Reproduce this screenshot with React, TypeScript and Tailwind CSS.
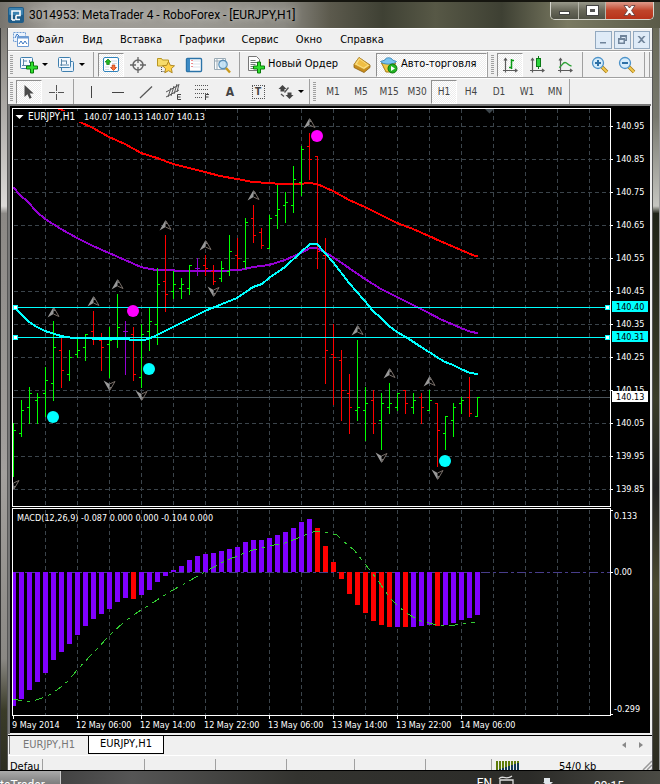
import type { ReactNode } from "react";

const UI = "font-['DejaVu_Sans_Condensed','Open_Sans',sans-serif]";

type Bar = [string, number, number, number | null, number];

const FIRST_X = 13;
const STEP = 8;

// colour, high, low, open, close
const BARS: Bar[] = [
  ["g", 423, 477, null, 430],
  ["g", 400, 437, 433, 410],
  ["g", 387, 424, 407, 393],
  ["g", 393, 424, 400, 397],
  ["g", 367, 417, 393, 380],
  ["g", 321, 401, 383, 347],
  ["r", 337, 388, 350, 370],
  ["g", 350, 381, 374, 357],
  ["g", 337, 358, 354, 350],
  ["g", 334, 361, 347, 334],
  ["r", 311, 345, 331, 338],
  ["r", 333, 371, 340, 347],
  ["g", 327, 378, 344, 340],
  ["g", 294, 348, 337, 327],
  ["p", 321, 375, 331, 331],
  ["r", 327, 381, 334, 374],
  ["g", 324, 388, 377, 334],
  ["g", 307, 351, 331, 321],
  ["g", 268, 345, 324, 284],
  ["r", 235, 312, 281, 294],
  ["g", 271, 299, 291, 284],
  ["g", 278, 299, 288, 284],
  ["g", 265, 295, 288, 265],
  ["p", 258, 276, 268, 268],
  ["r", 255, 276, 265, 268],
  ["r", 265, 285, 271, 281],
  ["g", 261, 282, 278, 268],
  ["g", 235, 276, 271, 251],
  ["r", 238, 269, 255, 258],
  ["g", 218, 269, 261, 222],
  ["r", 205, 243, 218, 235],
  ["r", 228, 249, 232, 245],
  ["g", 215, 249, 248, 218],
  ["g", 185, 229, 215, 209],
  ["g", 192, 223, 205, 202],
  ["g", 166, 213, 205, 179],
  ["g", 146, 196, 182, 149],
  ["r", 133, 180, 146, 159],
  ["r", 156, 269, 156, 251],
  ["r", 238, 384, 255, 350],
  ["r", 324, 405, 354, 357],
  ["r", 350, 421, 360, 390],
  ["r", 374, 434, 393, 407],
  ["g", 340, 421, 410, 407],
  ["g", 387, 441, 410, 403],
  ["r", 390, 434, 400, 423],
  ["g", 393, 450, 420, 403],
  ["g", 383, 414, 407, 403],
  ["g", 393, 411, 407, 393],
  ["r", 390, 414, 390, 403],
  ["g", 393, 414, 407, 400],
  ["r", 393, 424, 397, 407],
  ["g", 390, 411, 410, 400],
  ["r", 403, 467, 403, 430],
  ["g", 416, 450, 433, 416],
  ["g", 403, 437, 420, 407],
  ["g", 397, 414, 403, 400],
  ["r", 377, 417, 397, 413],
  ["g", 397, 417, 416, 397],
];

const BAR_COLOR: Record<string, string> = { g: "#00ff00", r: "#ff0000", p: "#9400d3" };

const MACD = [
  706, 699, 690, 682, 673, 660, 652, 644, 635, 626, 619, 614, 609, 602, 598, 599, 595, 590, 582, 576,
  570, 566, 560, 556, 554, 553, 551, 549, 547, 542, 540, 540, 538, 535, 532, 528, 522, 519, 528, 546,
  562, 579, 594, 605, 613, 621, 625, 627, 627, 627, 627, 626, 625, 626, 625, 623, 620, 618, 615,
];
const MACD_RED = new Set([15, 38, 39, 40, 41, 42, 43, 44, 45, 46, 47, 49, 53]);
const ZERO_Y = 572;

const RED_MA =
  "57,108 62,110 80,122 93,128 109,137 125,144 141,153 157,158 173,164 205,172 220,176 237,179 253,182 269,183 280,184 300,184 308,183 317,184 333,191 349,200 365,207 381,215 397,223 413,229 429,236 440,241 461,250 475,256 478,256";
const PURPLE_MA =
  "13,187 20,195 28,202 37,212 45,219 61,229 77,238 93,246 109,253 125,260 141,267 150,269 157,270 173,270 176,271 220,271 240,270 253,267 269,265 285,260 301,253 310,248 317,248 333,257 349,268 365,279 381,289 397,297 413,305 429,313 440,319 461,328 471,332 478,333";
const CYAN_MA =
  "14,307 20,313 29,322 37,327 45,331 61,336 73,338 109,339 127,339 132,340 145,340 153,337 173,327 189,319 205,311 222,304 237,298 253,287 262,284 269,278 285,267 301,252 310,244 317,244 325,253 333,262 349,283 364,300 373,311 381,318 389,326 397,332 409,339 421,347 429,352 440,359 445,362 453,365 461,369 470,373 478,374";
const SIGNAL =
  "13,699 23,701 33,701 45,697 51,694 61,687 69,680 77,670 93,653 109,636 125,621 141,610 157,600 173,590 189,581 205,572 221,563 237,556 253,550 269,546 285,543 301,537 309,533 317,531 328,533 337,535 343,541 354,550 359,556 365,564 373,574 381,585 389,597 397,605 405,612 413,617 421,621 429,623 437,625 455,625 463,624 475,622";

const UP = [[165, 220], [205, 240], [53, 307], [93, 296], [117, 279], [253, 190], [309, 118], [357, 325], [389, 368], [429, 376]];
const DOWN = [[213, 297], [109, 391], [141, 401], [13, 490], [381, 463], [437, 480]];

const PRICES = ["140.95", "140.85", "140.75", "140.65", "140.55", "140.45", "140.35", "140.25", "140.15", "140.05", "139.95", "139.85"];
const TIMES: [number, string][] = [
  [12, "9 May 2014"],
  [76, "12 May 06:00"],
  [140, "12 May 14:00"],
  [204, "12 May 22:00"],
  [268, "13 May 06:00"],
  [332, "13 May 14:00"],
  [396, "13 May 22:00"],
  [460, "14 May 06:00"],
];
const GRID_X = Array.from({ length: 18 }, (_, i) => 45 + 32 * i);

function Fractal({ x, y, down }: { x: number; y: number; down?: boolean }) {
  return (
    <g transform={`translate(${x + 0.5} ${y}) scale(1 ${down ? -1 : 1})`}>
      <path d="M0 0 L-6 10.500 L0 7 Z" fill="#999" />
      <path d="M0 0 L1.500 3.500 L0 4.500 Z" fill="#999" />
      <path d="M0.500 1 L5.500 9.500 L0 7" fill="none" stroke="#7a706a" strokeWidth="1" />
    </g>
  );
}

function Chart() {
  return (
    <svg viewBox="8 104 644 631" className="block h-auto w-full" role="img" aria-label="EURJPY,H1">
      <defs>
        <clipPath id="main">
          <rect x="13" y="109" width="597" height="397" />
        </clipPath>
      </defs>
      <rect x="8" y="104" width="644" height="631" fill="#f0f0f0" />
      <rect x="8" y="104" width="643" height="2" fill="#777" />
      <rect x="8" y="104" width="2" height="630" fill="#777" />
      <rect x="10" y="106" width="640" height="627" fill="#000" />
      <g shapeRendering="crispEdges" stroke="#3b444b" strokeDasharray="4 3" fill="none">
        {GRID_X.map((x) => (
          <path key={x} d={`M${x + 0.5} 109V506M${x + 0.5} 510V715`} />
        ))}
        {PRICES.map((p, i) => (
          <path key={p} d={`M14 ${126.5 + 33 * i}H610`} />
        ))}
      </g>
      <path d="M12 397.5H610" stroke="#4a545b" shapeRendering="crispEdges" />
      <g clipPath="url(#main)">
        <g fill="none" strokeWidth="2" strokeLinejoin="round" shapeRendering="crispEdges">
          <polyline points={RED_MA} stroke="#ff0000" />
          <polyline points={PURPLE_MA} stroke="#9400d3" />
        </g>
        <g shapeRendering="crispEdges" fill="none">
          {BARS.map(([c, hi, lo, op, cl], i) => {
            const x = FIRST_X + STEP * i;
            return (
              <path
                key={i}
                stroke={BAR_COLOR[c]}
                d={`M${x + 0.5} ${hi}V${lo}M${x + 1} ${cl + 0.5}h2${op === null ? "" : `M${x - 2} ${op + 0.5}h2`}`}
              />
            );
          })}
        </g>
        <polyline points={CYAN_MA} fill="none" stroke="#00ffff" strokeWidth="2" strokeLinejoin="round" shapeRendering="crispEdges" />
        {UP.map(([x, y]) => (
          <Fractal key={`${x}-${y}`} x={x} y={y} />
        ))}
        {DOWN.map(([x, y]) => (
          <Fractal key={`${x}-${y}`} x={x} y={y} down />
        ))}
        <path d="M485 109h9l-4.500 4.500z" fill="#3e474d" />
      </g>
      <g shapeRendering="crispEdges">
        <path d="M13 307.500H610M13 337.500H610" stroke="#00ffff" />
        {[[15, 307], [15, 337], [607, 307], [607, 337]].map(([x, y]) => (
          <rect key={`${x}-${y}`} x={x - 1.5} y={y - 1.5} width="4" height="4" fill="#fff" stroke="#00ffff" />
        ))}
      </g>
      <g>
        <circle cx="317" cy="136" r="6" fill="#ff00ff" />
        <circle cx="133" cy="311" r="6" fill="#ff00ff" />
        <circle cx="149" cy="369" r="6" fill="#00ffff" />
        <circle cx="53" cy="417" r="6" fill="#00ffff" />
        <circle cx="445" cy="461" r="6" fill="#00ffff" />
      </g>
      <g shapeRendering="crispEdges">
        <path d={`M13 ${ZERO_Y + 0.5}H610`} stroke="#483d8b" strokeDasharray="9 3 3 3" />
        {MACD.map((y, i) => {
          const x = i === 0 ? 13 : FIRST_X + STEP * i - 2;
          return (
            <rect
              key={i}
              x={x}
              y={Math.min(y, ZERO_Y)}
              width={i === 0 ? 3 : 5}
              height={Math.abs(y - ZERO_Y)}
              fill={MACD_RED.has(i) ? "#ff0000" : "#8000ff"}
            />
          );
        })}
        <polyline points={SIGNAL} fill="none" stroke="#32cd32" strokeDasharray="9 5 3 5" />
        <path
          d="M12.500 108.500H610.500V506.500H12.500ZM12.500 508.500H610.500V715.500H12.500Z"
          fill="none"
          stroke="#fff"
        />
        <path
          stroke="#fff"
          d={PRICES.map((_, i) => `M611 ${126.5 + 33 * i}h2`).join("") + "M611 510.500h2M611 572.500h2M611 714.500h2" + TIMES.map(([x]) => `M${x + 1.5} 716v3`).join("")}
        />
      </g>
      <rect x="16" y="111" width="190" height="11" fill="#000" />
      <path d="M15.500 115h8l-4 4z" fill="#fff" />
      <g className={`text-[9px] ${UI}`} fill="#fff">
        <text x="28" y="120" className="text-[10px]">EURJPY,H1</text>
        <text x="84" y="120">140.07 140.13 140.07 140.13</text>
        <text x="17" y="521">MACD(12,26,9) -0.087 0.000 0.000 -0.104 0.000</text>
        {PRICES.map((p, i) => (
          <text key={p} x="616" y={129 + 33 * i}>{p}</text>
        ))}
        <text x="614" y="519">0.133</text>
        <text x="614" y="575">0.00</text>
        <text x="614" y="712">-0.299</text>
        {TIMES.map(([x, t]) => (
          <text key={t} x={x} y="728">{t}</text>
        ))}
      </g>
      <rect x="612" y="301" width="36" height="11" fill="#00ffff" />
      <rect x="612" y="331" width="36" height="11" fill="#00ffff" />
      <rect x="612" y="391" width="36" height="11" fill="#fff" />
      <g className={`text-[9px] ${UI}`} fill="#000">
        <text x="616" y="310">140.40</text>
        <text x="616" y="340">140.31</text>
        <text x="616" y="400">140.13</text>
      </g>
    </svg>
  );
}

function Icon({ children, size = 18 }: { children: ReactNode; size?: number }) {
  return (
    <svg width={size} height={size} viewBox={`0 0 ${size} ${size}`} fill="none" aria-hidden="true" className="shrink-0">
      {children}
    </svg>
  );
}

const Plus = () => <path d="M10.500 6h3v4h4v3h-4v4h-3v-4h-4v-3h4z" fill="#2fe02f" stroke="#0a7a0a" />;

const ICONS = {
  newChart: (
    <Icon>
      <rect x="0.500" y="1.500" width="12" height="11" rx="1" fill="#f4f9ff" stroke="#3f7fae" />
      <path d="M3.500 3v7M2 9.500h9M3 5h4M9.500 4v3" stroke="#5b87a8" />
      <Plus />
    </Icon>
  ),
  profiles: (
    <Icon>
      <rect x="4.500" y="5.500" width="12" height="10" rx="1" fill="#e8f2fb" stroke="#3f7fae" />
      <rect x="1.500" y="1.500" width="12" height="10" rx="1" fill="#f4f9ff" stroke="#3f7fae" />
      <path d="M4.500 3v7M3 9h9M4 5h6M9.500 5v3" stroke="#5b87a8" />
    </Icon>
  ),
  market: (
    <Icon>
      <rect x="1.500" y="1.500" width="15" height="14" rx="1.500" fill="#fff" stroke="#2f83bd" />
      <path d="M9 5h6M10 7.500h5M3 11h4M3 13.500h4" stroke="#cfdae4" />
      <path d="M6 3l3 3H7.300v2.500H4.700V6H3z" fill="#22b822" stroke="#0c7a0c" strokeWidth=".7" />
      <path d="M11.500 14.500l-3-3h1.700V9h2.600v2.500h1.700z" fill="#ff7438" stroke="#b63408" strokeWidth=".7" />
    </Icon>
  ),
  target: (
    <Icon>
      <circle cx="9" cy="9" r="5" stroke="#666" strokeWidth="1.500" />
      <path d="M9 1v6M9 11v6M1 9h6M11 9h6" stroke="#666" strokeWidth="1.300" />
    </Icon>
  ),
  folder: (
    <Icon>
      <path d="M.5 2.500h4l1 1.500h6v6H.5z" fill="#f7dc6a" stroke="#b99622" />
      <path d="M4.500 11v5M4.500 15.500h5" stroke="#555" strokeDasharray="1 1" />
      <path d="M11.500 5.500l1.800 3.800 4.200.5-3.100 2.800.8 4.200-3.700-2.100-3.700 2.100.8-4.200-3.100-2.800 4.200-.5z" fill="#ffd24a" stroke="#a8811b" strokeWidth=".9" />
    </Icon>
  ),
  book: (
    <Icon>
      <rect x="1.500" y="2.500" width="15" height="13" rx="1" fill="#fff" stroke="#2b73a8" strokeWidth="1.400" />
      <rect x="2" y="3" width="3" height="12" fill="#3c8ac4" />
      <path d="M7.500 5h8M7.500 8h8M7.500 11h8" stroke="#d9e3ec" />
      <path d="M6.500 4.500h1M6.500 7.500h1M6.500 10.500h1" stroke="#e02020" />
    </Icon>
  ),
  tester: (
    <Icon>
      <path d="M1.500 2.500h11v11h-11zM4 2v12M10 2v12M1 5h12" stroke="#9aaab5" fill="#fafcfd" />
      <circle cx="10" cy="8.500" r="4.200" fill="#bfe0f6" fillOpacity=".85" stroke="#5a90b8" strokeWidth="1.200" />
      <path d="M13 12l4 4.500" stroke="#c9991d" strokeWidth="2.400" />
    </Icon>
  ),
  order: (
    <Icon>
      <path d="M1.500.5h8l3 3v11h-11z" fill="#fdfdfd" stroke="#777" />
      <path d="M3.500 4.500h5M3.500 6.500h7M3.500 8.500h5M3.500 10.500h3M3.500 12.500h3" stroke="#6f7d76" />
      <Plus />
    </Icon>
  ),
  gold: (
    <Icon>
      <path d="M6 1.500L1 8.500v3l10 5 6-5V9z" fill="#c98d1c" stroke="#8d5f0c" strokeWidth=".8" />
      <path d="M6 1.500L1.200 8.500l9.800 5L17 9.500z" fill="#fbdc7c" stroke="#b98921" strokeWidth=".6" />
      <path d="M6.500 3.500L4 8l6.500 3.500 4-2.500z" fill="#efbe45" />
    </Icon>
  ),
  auto: (
    <Icon>
      <path d="M1.500 7h14l-3 9H6z" fill="#f0c743" stroke="#a77a12" />
      <path d="M5 4C5 1 12 1 12.500 4l4 1.500c-2 3.500-14 3.500-16 0z" fill="#79c3ef" stroke="#2f7eb0" strokeWidth=".8" />
      <circle cx="12.500" cy="12.500" r="4.500" fill="#22b322" stroke="#0c760c" />
      <path d="M11 10v5l4-2.500z" fill="#fff" />
    </Icon>
  ),
  bars: (
    <Icon>
      <path d="M4.500 2.500v14M2 14.500h14M3 4.500l1.500-2 1.500 2M14 13l2 1.500-2 1.500" stroke="#5b5b5b" strokeWidth="1.200" />
      <path d="M10.500 3v10M10 4.500h3M8 11.500h3" stroke="#0b9a16" strokeWidth="1.500" />
    </Icon>
  ),
  candle: (
    <Icon>
      <path d="M4.500 2.500v14M2 14.500h14M3 4.500l1.500-2 1.500 2M14 13l2 1.500-2 1.500" stroke="#5b5b5b" strokeWidth="1.200" />
      <path d="M10.500 0v13" stroke="#0b7a16" />
      <rect x="8.500" y="2.500" width="4" height="8" fill="#2bd33a" stroke="#0b7a16" />
    </Icon>
  ),
  line: (
    <Icon>
      <path d="M4.500 2.500v14M2 14.500h14M3 4.500l1.500-2 1.500 2M14 13l2 1.500-2 1.500" stroke="#5b5b5b" strokeWidth="1.200" />
      <path d="M3 11.500c3-1 3.500-5 6-5s3 3 6.500 3.500" stroke="#2ea236" strokeWidth="1.300" />
    </Icon>
  ),
  zoomIn: (
    <Icon>
      <path d="M11 11l5 5" stroke="#a87a10" strokeWidth="3.500" />
      <path d="M11 11l5 5" stroke="#f0c850" strokeWidth="2" />
      <circle cx="7" cy="7" r="5.500" fill="#d5ecfb" stroke="#4d93c9" strokeWidth="1.300" />
      <path d="M4 7h6M7 4v6" stroke="#2d70a6" strokeWidth="2" />
    </Icon>
  ),
  zoomOut: (
    <Icon>
      <path d="M11 11l5 5" stroke="#a87a10" strokeWidth="3.500" />
      <path d="M11 11l5 5" stroke="#f0c850" strokeWidth="2" />
      <circle cx="7" cy="7" r="5.500" fill="#d5ecfb" stroke="#4d93c9" strokeWidth="1.300" />
      <path d="M4 7h6" stroke="#2d70a6" strokeWidth="2" />
    </Icon>
  ),
  cursor: (
    <Icon>
      <path d="M4.500 2v12l3-2.800 2 4.600 2.200-1L9.700 10.500h4z" fill="#4b4b4b" />
    </Icon>
  ),
  cross: (
    <Icon>
      <path d="M9.500 2v6M9.500 11v6M2 9.500h6M11 9.500h6M9 9.500h1" stroke="#555" />
    </Icon>
  ),
  vline: (
    <Icon>
      <path d="M9.500 3v12" stroke="#444" />
    </Icon>
  ),
  hline: (
    <Icon>
      <path d="M3 9.500h12" stroke="#444" />
    </Icon>
  ),
  trend: (
    <Icon>
      <path d="M3 15L15 3.500" stroke="#555" strokeWidth="1.200" />
    </Icon>
  ),
  channel: (
    <Icon>
      <path d="M1 9L14 2M1 14L14 7M3 14L6 5M6 13L9 3M9 11L12 1M12 9l2-8" stroke="#555" />
      <path d="M16 11.500h-3.500v5H16M12.500 14h3" stroke="#444" />
    </Icon>
  ),
  fibo: (
    <Icon>
      <path d="M2 2.500h13M2 6.500h13M2 10.500h13M2 14.500h8" stroke="#555" strokeDasharray="1 1" />
      <path d="M16 11.500h-3.500v5.500M12.500 14h3" stroke="#444" />
    </Icon>
  ),
  arrows: (
    <Icon>
      <path d="M5.500 2l4 4h-2v2.500h-4V6h-2zM12.500 16l-4-4h2V9.500h4V12h2z" fill="#444" />
      <path d="M4 11l3 2.500M11.500 4.500l-4 5" stroke="#555" strokeWidth="1.300" />
    </Icon>
  ),
};

const Grip = () => (
  <span className="mr-[3px] h-[20px] w-[3px] shrink-0 bg-[repeating-linear-gradient(180deg,#a0a0a0_0_1px,#f0f0f0_1px_2px)]" />
);
const Sep = () => <span className="mr-[4px] ml-[3px] w-px shrink-0 self-stretch bg-[#a0a0a0]" />;
const Caret = () => <span className="h-0 w-0 border-x-[3px] border-t-[3px] border-x-transparent border-t-black" />;

const PRESSED =
  "border border-t-[#8f8f8f] border-l-[#8f8f8f] border-r-white border-b-white bg-[repeating-conic-gradient(#fff_0_25%,#ececec_0_50%)] bg-[length:2px_2px]";

function Tool({ label, icon, className = "w-[28px]" }: { label: string; icon: ReactNode; className?: string }) {
  return (
    <button type="button" aria-label={label} className={`flex h-[24px] shrink-0 items-center justify-center ${className}`}>
      {icon}
    </button>
  );
}

function MenuBar() {
  const items: [string, string][] = [
    ["Файл", "w-[40px]"],
    ["Вид", "w-[45px]"],
    ["Вставка", "w-[52px]"],
    ["Графики", "w-[70px]"],
    ["Сервис", "w-[46px]"],
    ["Окно", "w-[52px]"],
    ["Справка", "w-[54px]"],
  ];
  return (
    <div className="flex h-[23px] items-center border-t border-b border-t-white border-b-[#a0a0a0] pl-[4px]">
      <Icon>
        <path d="M1.500 1.500h12v9h-12z" stroke="#6d9bd3" fill="#eaf3fd" strokeDasharray="2 1" />
        <path d="M5.500 5.500h11v10h-11z" fill="#fff" stroke="#6d9bd3" />
        <path d="M5.500 6.500h11" stroke="#6d9bd3" strokeWidth="2" />
        <path d="M7 13l2-3 2 3 2-3 2 3M3 7l2-4 2 2" stroke="#3c78c3" />
      </Icon>
      <nav className={`flex flex-1 pt-px text-[11px] ${UI}`}>
        {items.map(([t, w]) => (
          <button type="button" key={t} className={`shrink-0 text-center ${w}`}>
            {t}
          </button>
        ))}
      </nav>
      <div className="flex gap-[2px] pr-[2px]">
        {[
          ["Свернуть", "M5 11h6v1.500H5z"],
          ["Восстановить", "M6 4h7v6h-2v3H4V7h2zM7.500 6v1H11v1.500h.5V6zM5.500 9v2.500h4V9z"],
          ["Закрыть", "M4.500 5h2l2 2 2-2h2L9.500 8.500l3 3.500h-2l-2-2-2 2h-2l3-3.500z"],
        ].map(([l, d]) => (
          <button type="button" key={l} aria-label={l} className="flex h-[18px] w-[17px] items-center justify-center border border-[#93a9bf] bg-[#dfebf7]">
            <Icon size={17}>
              <path d={d} fill="#70849a" fillRule="evenodd" />
            </Icon>
          </button>
        ))}
      </div>
    </div>
  );
}

function MainToolbar() {
  return (
    <div className="flex h-[27px] items-center overflow-hidden border-t border-b border-t-white border-b-[#a0a0a0] pl-[2px]">
      <Grip />
      <button type="button" aria-label="Новый график" className="flex h-6 w-[37px] shrink-0 items-center gap-[4px] pl-[4px]">
        {ICONS.newChart}
        <Caret />
      </button>
      <button type="button" aria-label="Профили" className="flex h-6 w-[37px] shrink-0 items-center gap-[4px] pl-[4px]">
        {ICONS.profiles}
        <Caret />
      </button>
      <Sep />
      <Tool label="Обзор рынка" icon={ICONS.market} className={`w-[26px] ${PRESSED}`} />
      <Tool label="Окно данных" icon={ICONS.target} />
      <Tool label="Навигатор" icon={ICONS.folder} />
      <Tool label="Терминал" icon={ICONS.book} />
      <Tool label="Тестер стратегий" icon={ICONS.tester} />
      <Sep />
      <button type="button" className={`flex h-6 w-[104px] shrink-0 items-center gap-[3px] pl-[3px] text-[11px] whitespace-nowrap ${UI}`}>
        {ICONS.order}
        Новый Ордер
      </button>
      <Tool label="MetaEditor" icon={ICONS.gold} />
      <button type="button" className={`flex h-6 w-[111px] shrink-0 items-center gap-[3px] pl-[3px] text-[11px] whitespace-nowrap ${UI} ${PRESSED}`}>
        {ICONS.auto}
        Авто-торговля
      </button>
      <span className="mr-[3px] w-px shrink-0 self-stretch bg-[#a0a0a0]" />
      <Grip />
      <Tool label="Бары" icon={ICONS.bars} className={`w-[26px] ${PRESSED}`} />
      <Tool label="Японские свечи" icon={ICONS.candle} />
      <Tool label="Линия" icon={ICONS.line} />
      <Sep />
      <Tool label="Увеличить" icon={ICONS.zoomIn} className="w-[26px]" />
      <Tool label="Уменьшить" icon={ICONS.zoomOut} />
      <Sep />
      <span className="w-px shrink-0 self-stretch bg-[#a0a0a0]" />
    </div>
  );
}

function LineToolbar() {
  const frames = ["M1", "M5", "M15", "M30", "H1", "H4", "D1", "W1", "MN"];
  return (
    <div className={`flex h-[26px] items-center overflow-hidden border-t border-t-white pl-[2px] text-[#444] ${UI}`}>
      <Grip />
      <Tool label="Курсор" icon={ICONS.cursor} className={`w-[26px] ${PRESSED}`} />
      <Tool label="Перекрестие" icon={ICONS.cross} />
      <Sep />
      <Tool label="Вертикальная линия" icon={ICONS.vline} className="w-[26px]" />
      <Tool label="Горизонтальная линия" icon={ICONS.hline} />
      <Tool label="Трендовая линия" icon={ICONS.trend} />
      <Tool label="Канал" icon={ICONS.channel} />
      <Tool label="Фибоначчи" icon={ICONS.fibo} />
      <button type="button" className="h-6 w-[28px] shrink-0 text-[12px] font-semibold">A</button>
      <button type="button" className="flex h-6 w-[28px] shrink-0 items-center justify-center">
        <span className="flex h-[14px] w-[13px] items-center justify-center border border-dotted border-[#555] text-[10px] font-bold">T</span>
      </button>
      <button type="button" aria-label="Стрелки" className="flex h-6 w-[37px] shrink-0 items-center gap-[3px] pl-[5px]">
        {ICONS.arrows}
        <Caret />
      </button>
      <span className="mr-[3px] w-px shrink-0 self-stretch bg-[#a0a0a0]" />
      <Grip />
      <div className="flex">
        {frames.map((f) => (
          <button
            type="button"
            key={f}
            className={`h-[24px] shrink-0 text-center text-[10px] ${f === "H1" ? `w-[26px] ${PRESSED}` : "w-[28px]"}`}
          >
            {f}
          </button>
        ))}
      </div>
      <span className="w-px shrink-0 self-stretch bg-[#a0a0a0]" />
    </div>
  );
}

function TitleBar() {
  return (
    <header className="flex h-[28px] items-start border-t-2 border-t-[#15150f] bg-[linear-gradient(90deg,#77746e_0,#a29f99_8%,#9b9993_30%,#8b8982_43%,#5c5a4d_50%,#3f4134_58%,#575846_66%,#3e4033_76%,#7a7a62_86%,#5a5a48_100%)]">
      <svg width="16" height="16" viewBox="0 0 16 16" className="mt-[5px] ml-[8px] shrink-0" aria-hidden="true">
        <rect width="16" height="16" rx="2" fill="#1f5c88" />
        <rect x="1" y="1" width="14" height="7" rx="1" fill="#3c82b0" />
        <path d="M4 13V4h8v4.500H8M4 13h3M8 8.500V12.500h4" fill="none" stroke="#fff" strokeWidth="1.600" />
      </svg>
      <h1 className="mt-[4px] ml-[5px] flex-1 font-['Roboto','Noto_Sans',sans-serif] text-[12px] leading-[18px] whitespace-nowrap text-black [text-shadow:0_0_6px_#d8d8d4]">
        3014953: MetaTrader 4 - RoboForex - [EURJPY,H1]
      </h1>
      <div className="mr-[6px] flex h-[18px] w-[104px] overflow-hidden rounded-b-[5px] border border-t-0 border-[#d5d5cd]">
        <button type="button" aria-label="Свернуть" className="flex w-[28px] items-center justify-center border-r border-[#b5b5aa] bg-linear-to-b from-[#99998b] via-[#68685a] to-[#4f5044]">
          <span className="mt-[5px] h-[4px] w-[11px] border border-[#444] bg-white" />
        </button>
        <button type="button" aria-label="Развернуть" className="flex w-[27px] items-center justify-center border-r border-[#b5b5aa] bg-linear-to-b from-[#99998b] via-[#68685a] to-[#4f5044]">
          <span className="h-[9px] w-[11px] border-[3px] border-white bg-[#555] outline outline-[#444]" />
        </button>
        <button type="button" aria-label="Закрыть" className="flex flex-1 items-center justify-center bg-linear-to-b from-[#dd9a8a] via-[#c0442a] to-[#b8321a]">
          <svg width="13" height="11" viewBox="0 0 13 11" aria-hidden="true">
            <path d="M1 .5h3.500l2 2.500 2-2.500H12L8.500 5.500l3.500 5H8.500l-2-2.500-2 2.500H1l3.500-5z" fill="#fff" stroke="#5b3a3a" strokeWidth=".8" />
          </svg>
        </button>
      </div>
    </header>
  );
}

function Tabs() {
  return (
    <div className={`flex h-[21px] items-start border-t border-b border-t-black border-b-white pl-px text-[11px] ${UI}`}>
      <button type="button" className="h-[18px] w-[79px] border-l border-l-[#777] text-[#777]">EURJPY,H1</button>
      <button type="button" className="h-[18px] w-[76px] border border-t-0 border-black bg-white text-black">EURJPY,H1</button>
      <div className="ml-auto flex h-[18px] items-center gap-[13px] pr-[9px]">
        <span className="border-y-[3px] border-r-[4px] border-y-transparent border-r-[#888]" />
        <span className="border-y-[3px] border-l-[4px] border-y-transparent border-l-[#888]" />
      </div>
    </div>
  );
}

function StatusBar() {
  const cell = "h-[11px] shrink-0 border-l border-l-[#a0a0a0]";
  return (
    <footer className={`flex h-[14px] items-start overflow-hidden pt-[3px] text-[11px] leading-[16px] ${UI}`}>
      <span className="mr-[2px] w-[32px] shrink-0 overflow-hidden pl-[2px]">Default</span>
      <span className={`w-[102px] ${cell}`} />
      <span className={`w-[71px] ${cell}`} />
      <span className={`w-[71px] ${cell}`} />
      <span className={`w-[68px] ${cell}`} />
      <span className={`w-[71px] ${cell}`} />
      <span className={`w-[66px] ${cell}`} />
      <span className={`flex w-[68px] ${cell}`}>
        <svg width="24" height="11" viewBox="0 0 24 11" className="mt-[2px] ml-[4px]" aria-hidden="true">
          {[0, 1, 2, 3, 4, 5, 6, 7].map((i) => (
            <g key={i}>
              <rect x={i * 3} y="0" width="2" height={9 - i} fill="#5f7d0c" />
              <rect x={i * 3} y={9 - i} width="2" height="8" fill="#123a55" />
            </g>
          ))}
        </svg>
      </span>
      <span className="flex-1">54/0 kb</span>
      <svg width="10" height="10" viewBox="0 0 10 10" className="mt-px" aria-hidden="true">
        <path d="M1 10L10 1M5 10l5-5M9 10l1-1" stroke="#999" strokeWidth="1.500" />
      </svg>
    </footer>
  );
}

export default function App() {
  return (
    <div className="min-h-screen w-full bg-[#33342a]">
      <TitleBar />
      <main className="flex">
        <div className="w-[8px] shrink-0 border-r border-l border-r-[#555] border-l-[#333] bg-[linear-gradient(180deg,#7f7c76_0,#aaa7a3_10%,#dcdad8_24%,#8b8885_25%,#a3a09d_60%,#8a8884_85%,#3a3b28_92%,#2d2e22_100%)]" />
        <div className="min-w-0 flex-1 bg-[#f0f0f0]">
          <MenuBar />
          <MainToolbar />
          <LineToolbar />
          <Chart />
          <Tabs />
          <StatusBar />
        </div>
        <div className="w-[8px] shrink-0 border-r border-l border-r-[#999] border-l-[#555] bg-[linear-gradient(180deg,#6a6a58_0,#77786e_12%,#c5c5c0_24%,#202418_25%,#3a3c28_50%,#222_62%,#4b4a30_75%,#2b2b20_100%)]" />
      </main>
      <div className="flex h-[14px] items-start overflow-hidden border-t border-black bg-[linear-gradient(90deg,#333,#555_20%,#33332f_45%,#2b2b28_80%,#4a4a44)] font-['Roboto','Noto_Sans',sans-serif] text-[12px] leading-[16px] text-white">
        <button type="button" className="h-[20px] w-[61px] shrink-0 overflow-hidden border-r border-[#ccc] bg-linear-to-b from-[#aaa] to-[#666] pt-[6px] text-left whitespace-nowrap">
          taTrader
        </button>
        <span className="ml-auto pt-[4px]">EN</span>
        <svg width="60" height="14" viewBox="0 0 60 14" className="ml-[6px]" aria-hidden="true">
          <path d="M1 8c3-5 6 2 13-3M2 13V9h13v4" fill="none" stroke="#ddd" strokeWidth="1.300" />
          <path d="M46 7h6v4h3l-5 5-5-5h1z" fill="#dfe5ea" />
        </svg>
        <span className="mr-[36px] ml-[36px] pt-[7px]">09:15</span>
      </div>
    </div>
  );
}
